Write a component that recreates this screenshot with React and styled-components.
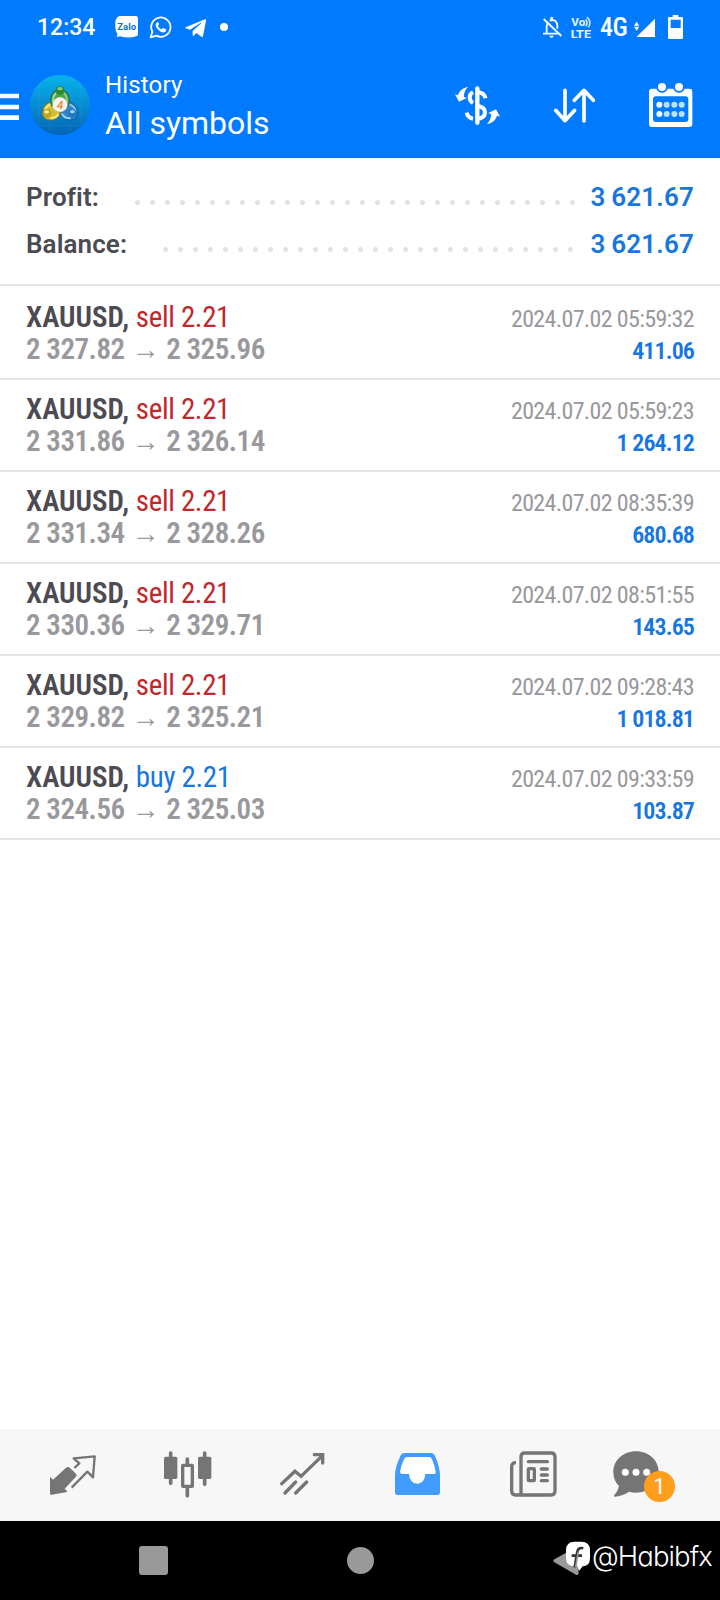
import React from 'react'
import styled, { createGlobalStyle } from 'styled-components'

const GlobalStyle = createGlobalStyle`
    * {
        box-sizing: border-box;
    }

    body {
        margin: 0;
        background: #fff;
        font-family: Roboto, sans-serif;
    }

    svg {
        display: block;
        flex: none;
    }
`

const summary = [
    { label: 'Profit:', value: '3 621.67' },
    { label: 'Balance:', value: '3 621.67' },
]

const deals = [
    { side: 'sell', open: '2 327.82', close: '2 325.96', time: '2024.07.02 05:59:32', profit: '411.06' },
    { side: 'sell', open: '2 331.86', close: '2 326.14', time: '2024.07.02 05:59:23', profit: '1 264.12' },
    { side: 'sell', open: '2 331.34', close: '2 328.26', time: '2024.07.02 08:35:39', profit: '680.68' },
    { side: 'sell', open: '2 330.36', close: '2 329.71', time: '2024.07.02 08:51:55', profit: '143.65' },
    { side: 'sell', open: '2 329.82', close: '2 325.21', time: '2024.07.02 09:28:43', profit: '1 018.81' },
    { side: 'buy', open: '2 324.56', close: '2 325.03', time: '2024.07.02 09:33:59', profit: '103.87' },
]

function App() {
    return (
        <Screen>
            <GlobalStyle />
            <Header>
                <StatusBar>
                    <Clock>12:34</Clock>
                    <StatusIcons>
                        <ZaloIcon />
                        <WhatsAppIcon />
                        <TelegramIcon />
                        <DotIcon />
                    </StatusIcons>
                    <StatusIcons $end>
                        <BellOffIcon />
                        <VolteIcon />
                        <Network>4G</Network>
                        <SignalIcon />
                        <BatteryIcon />
                    </StatusIcons>
                </StatusBar>
                <AppBar>
                    <Brand>
                        <MenuIcon />
                        <LogoIcon />
                    </Brand>
                    <Titles>
                        <Section>History</Section>
                        <Title>All symbols</Title>
                    </Titles>
                    <Actions>
                        <CurrencyIcon />
                        <SortIcon />
                        <CalendarIcon />
                    </Actions>
                </AppBar>
            </Header>

            <Summary>
                {summary.map((item) => (
                    <SummaryRow key={item.label}>
                        <Label>{item.label}</Label>
                        <Dots />
                        <Total>{item.value}</Total>
                    </SummaryRow>
                ))}
            </Summary>

            <Deals>
                {deals.map((deal) => (
                    <Deal key={deal.time}>
                        <Line>
                            <Symbol>
                                XAUUSD, <Side $buy={deal.side === 'buy'}>{deal.side} 2.21</Side>
                            </Symbol>
                            <Time>{deal.time}</Time>
                        </Line>
                        <Line>
                            <Prices>
                                {deal.open}
                                <Arrow>→</Arrow>
                                {deal.close}
                            </Prices>
                            <Profit>{deal.profit}</Profit>
                        </Line>
                    </Deal>
                ))}
            </Deals>

            <Tabs>
                <Tab><QuotesIcon /></Tab>
                <Tab><ChartIcon /></Tab>
                <Tab><TradeIcon /></Tab>
                <Tab $active><HistoryIcon /></Tab>
                <Tab><NewsIcon /></Tab>
                <Tab>
                    <ChatIcon />
                    <Badge>1</Badge>
                </Tab>
            </Tabs>

            <SystemNav>
                <Key><Recent /></Key>
                <Key><Home /></Key>
                <Key><BackIcon /></Key>
                <Watermark>
                    <FacebookIcon />
                    <Handle>@Habibfx</Handle>
                </Watermark>
            </SystemNav>
        </Screen>
    )
}

export default App

const ZaloIcon = () => (
    <svg width="25" height="27" viewBox="345 36 75 81">
        <path d="M357 45h50q7 0 7 7v46q0 6-5 8-24 7-49 0-5 2-11 1 4-3 3-8-6-8-6-22V64q0-12 11-19z" fill="#fff" />
        <text x="352" y="87" fontFamily="Roboto, sans-serif" fontSize="27" fontWeight="700" fill="#0a6fe6" textLength="56" lengthAdjust="spacingAndGlyphs">Zalo</text>
    </svg>
)

const WhatsAppIcon = () => (
    <svg width="24" height="27" viewBox="444 36 72 81">
        <path d="M452 109l5-17a29 29 0 1 1 12 12z" fill="none" stroke="#fff" strokeWidth="5.5" strokeLinejoin="round" />
        <path d="M472 64c-7 4-6 12 0 19s15 13 21 11c5-2 7-6 5-9l-8-4c-2-1-4 4-6 4-3-1-9-6-10-10 0-2 4-3 3-6l-3-6q-1-1-2 1z" fill="#fff" />
    </svg>
)

const TelegramIcon = () => (
    <svg width="27" height="27" viewBox="540 36 81 81">
        <path d="M557 79l58-24q4-1 3 4l-9 46q-1 5-5 2l-15-11-8 8q-3 3-3-2v-12l26-24q1-2-2-1l-32 21-13-4q-3-1 0-3z" fill="#fff" />
    </svg>
)

const DotIcon = () => (
    <svg width="13" height="27" viewBox="645 36 39 81">
        <circle cx="672" cy="78" r="12" fill="#fff" />
    </svg>
)

const BellOffIcon = () => (
    <svg width="21" height="27" viewBox="546 36 63 81">
        <path d="M560 99V76q0-8 5-13M569 59q21-7 23 14v10M549 98h44" fill="none" stroke="#fff" strokeWidth="5.5" />
        <path d="M571 58v-7a4 4 0 0 1 8 0v7zM568 104h13q-1 6-6.500 6t-6.500-6z" fill="#fff" />
        <path d="M551 54l53 51" stroke="#fff" strokeWidth="5.500" />
    </svg>
)

const VolteIcon = () => (
    <svg width="21" height="27" viewBox="633 36 63 81">
        <g fill="#fff" fillOpacity="0.9" fontFamily="Roboto, sans-serif" fontWeight="800">
            <text x="634" y="75" fontSize="30" textLength="42" lengthAdjust="spacingAndGlyphs">Vo</text>
            <text x="632" y="112" fontSize="34" textLength="61" lengthAdjust="spacingAndGlyphs">LTE</text>
        </g>
        <path d="M677 55q8 10 0 21M681 48q15 14 4 31" fill="none" stroke="#fff" strokeOpacity="0.8" strokeWidth="5" />
    </svg>
)

const SignalIcon = () => (
    <svg width="22" height="27" viewBox="822 36 66 81">
        <path d="M885 53v55h-56zM822 74l8-12 8 12zM822 77h16l-8 12z" fill="#fff" />
    </svg>
)

const BatteryIcon = () => (
    <svg width="22" height="27" viewBox="912 36 66 81">
        <path d="M938 42h17v6h10q4 0 4 4v58q0 4-4 4h-37q-4 0-4-4V52q0-4 4-4h10zM932 56v25h30V56z" fill="#fff" fillRule="evenodd" />
    </svg>
)

const MenuIcon = () => (
    <svg width="19" height="34" viewBox="0 264 57 102">
        <path d="M0 288h57M0 321h57M0 353h57" stroke="#fff" strokeWidth="14" />
    </svg>
)

const LogoIcon = () => (
    <svg width="60" height="60" viewBox="15 15 180 180">
        <defs>
            <linearGradient id="sky" x1="0" y1="0" x2="0" y2="1">
                <stop offset="0" stopColor="#08b4ea" />
                <stop offset="0.5" stopColor="#078bd2" />
                <stop offset="1" stopColor="#0563b4" />
            </linearGradient>
            <linearGradient id="green" x1="0" y1="0" x2="0" y2="1">
                <stop offset="0" stopColor="#3d9a45" />
                <stop offset="1" stopColor="#a5d790" />
            </linearGradient>
            <linearGradient id="yellow" x1="0" y1="0" x2="0" y2="1">
                <stop offset="0" stopColor="#f3e56c" />
                <stop offset="1" stopColor="#c4a528" />
            </linearGradient>
            <linearGradient id="blue" x1="0" y1="0" x2="0" y2="1">
                <stop offset="0" stopColor="#2b86cf" />
                <stop offset="1" stopColor="#8cc9f5" />
            </linearGradient>
        </defs>
        <circle cx="105" cy="105" r="90" fill="url(#sky)" />
        <path d="M42 45v120M75 25v160M135 25v160M168 45v120M25 75h160M17 105h176M25 135h160M45 167h120" stroke="#5cc6f0" strokeOpacity="0.18" strokeWidth="2" />
        <path d="M124 94q32 6 34 33 1 23-22 23-26 0-32-27z" fill="#2f84c8" stroke="#14589b" strokeWidth="3" />
        <path d="M129 102q21 5 23 23" fill="none" stroke="#7fc0f0" strokeWidth="6" />
        <path d="M110 131q9 15 27 14" fill="none" stroke="#9bd3fa" strokeWidth="6" />
        <path d="M84 94q-30 6-31 33 0 23 22 23 22 1 31-20z" fill="#d3bd35" stroke="#7d7423" strokeWidth="3" />
        <path d="M80 102q-19 6-20 22" fill="none" stroke="#f4ea7e" strokeWidth="6" />
        <path d="M76 145q16 0 24-12" fill="none" stroke="#f6e878" strokeWidth="6" />
        <path d="M79 107q-6-26 7-41 19-18 38 0 14 16 7 41z" fill="#4ba052" stroke="#1c6a3a" strokeWidth="3" />
        <path d="M85 98q-3-18 8-28" fill="none" stroke="#a5d98e" strokeWidth="6" />
        <path d="M125 98q3-18-8-28" fill="none" stroke="#8fcd7c" strokeWidth="6" />
        <circle cx="105" cy="61" r="13" fill="#2f8a38" />
        <ellipse cx="105" cy="56" rx="8" ry="5" fill="#8ccb80" />
        <circle cx="66" cy="130" r="13" fill="#c2a51f" />
        <ellipse cx="65" cy="126" rx="7" ry="5" fill="#f8ea8e" />
        <circle cx="142" cy="130" r="13" fill="#2277c4" />
        <ellipse cx="142" cy="125" rx="7" ry="5" fill="#a3d6fa" />
        <circle cx="105" cy="104" r="22" fill="#f8f5ef" stroke="#c9c9b8" strokeWidth="1.500" />
        <text x="105" y="117" textAnchor="middle" fontFamily="Roboto, sans-serif" fontSize="35" fontWeight="700" fontStyle="italic" fill="#ef8b4a">4</text>
    </svg>
)

const CurrencyIcon = () => (
    <svg width="52" height="50" viewBox="276 240 156 150">
        <g fill="none" stroke="#fff" strokeWidth="12">
            <path d="M339 277q-10 5-10 15 0 11 10 17M320 338q3 15 19 18" />
            <path d="M352 277q20 0 25 18M352 317q23 4 23 20 0 17-23 20" />
        </g>
        <path d="M352 265v103" stroke="#fff" strokeWidth="13" strokeLinecap="round" />
        <path d="M324 261c-13 2-26 10-30 25l-9-3 12 22 23-11-8-3c-1-12 4-22 12-30z" fill="#fff" />
        <path d="M324 261c-13 2-26 10-30 25l-9-3 12 22 23-11-8-3c-1-12 4-22 12-30z" fill="#fff" transform="rotate(180 352.500 316.500)" />
    </svg>
)

const SortIcon = () => (
    <svg width="50" height="50" viewBox="570 240 150 150">
        <path d="M615 271v90M587 331l28 31 29-31M672 363v-91M643 301l29-30 28 30" fill="none" stroke="#fff" strokeWidth="11" strokeLinecap="round" strokeLinejoin="round" />
    </svg>
)

const CalendarIcon = () => (
    <svg width="49" height="50" viewBox="858 240 147 150">
        <path d="M875 266h14q5 12 17 12t17-12h17q5 12 17 12t17-12h14q9 0 9 9v97q0 9-9 9H875q-8 0-8-9v-97q0-9 8-9zM888 289q-9 0-9 9v59q0 9 9 9h88q9 0 9-9v-59q0-9-9-9z" fill="#fff" fillRule="evenodd" />
        <circle cx="906" cy="261" r="12" fill="#fff" />
        <circle cx="957" cy="261" r="12" fill="#fff" />
        {[898, 920, 943, 965].map((x) => (
            <g key={x} fill={x === 898 ? '#f2faff' : '#b9e2ff'}>
                <circle cx={x} cy="314" r="9" />
                <circle cx={x} cy="342" r="9" />
            </g>
        ))}
    </svg>
)

const QuotesIcon = () => (
    <svg width="75" height="60" viewBox="105 75 225 180">
        <path d="M150 170l9 9 39-36q7-4 12 1l18 17q4 5 0 9l-34 36 8 8q0 2-5 3l-42 7q-5 1-5-4z" fill="currentColor" />
        <path d="M223 144l15-14-17-15 63-6-5 63-17-17-47 48" fill="none" stroke="currentColor" strokeWidth="7" strokeLinejoin="round" />
    </svg>
)

const ChartIcon = () => (
    <svg width="75" height="60" viewBox="450 75 225 180">
        <g fill="currentColor">
            <rect x="492" y="110" width="40" height="67" rx="5" />
            <rect x="594" y="110" width="40" height="67" rx="5" />
        </g>
        <rect x="548" y="136" width="29" height="63" rx="1" fill="none" stroke="currentColor" strokeWidth="10" />
        <path d="M512 99v91M614 99v94M562 117v16M562 204v23" stroke="currentColor" strokeWidth="11" strokeLinecap="round" />
    </svg>
)

const TradeIcon = () => (
    <svg width="75" height="60" viewBox="795 75 225 180">
        <g fill="none" stroke="currentColor" strokeWidth="10" strokeLinecap="round">
            <path d="M845 191l40-37 18 15 62-60M943 104h25v25M855 219l32-33M887 219l33-33" />
        </g>
    </svg>
)

const HistoryIcon = () => (
    <svg width="75" height="60" viewBox="60 75 225 180">
        <path d="M134 99h78q10 0 13 9 15 34 15 58v51q0 8-8 8H113q-8 0-8-8v-51q0-24 16-58 4-9 13-9z" fill="currentColor" />
        <path d="M141 111q-6 0-9 7-9 18-12 37 0 7 7 7h20q2 28 25 29 22-1 24-29h24q8 0 7-7-3-19-11-37-3-7-9-7z" fill="#fff" />
    </svg>
)

const NewsIcon = () => (
    <svg width="75" height="60" viewBox="405 75 225 180">
        <g fill="none" stroke="currentColor" strokeWidth="10">
            <path d="M468 128q-13 0-13 12v73q0 12 12 12h106q12 0 12-12v-102q0-12-12-12h-79q-11 0-11 12v113" />
            <rect x="505" y="146" width="18" height="36" rx="2" />
            <path d="M505 125h57M544 147h18M544 165h18M544 182h18" strokeLinecap="round" />
        </g>
    </svg>
)

const ChatIcon = () => (
    <svg width="75" height="60" viewBox="750 75 225 180">
        <path d="M828 94c39 0 68 27 68 62s-29 62-68 62q-11 0-21-3-20 14-44 15-3-2 0-5 12-13 14-27-17-16-17-42c0-35 29-62 68-62z" fill="currentColor" />
        <circle cx="796" cy="157" r="10.500" fill="#fff" />
        <circle cx="828" cy="157" r="10.500" fill="#fff" />
        <circle cx="860" cy="157" r="10.500" fill="#fff" />
    </svg>
)

const BackIcon = () => (
    <svg width="28" height="30" viewBox="0 0 28 30">
        <path d="M1 13.500L23.500 1q2-.5 2 1.500v25q0 2-2.500 1.200L1 16q-1.500-1.200 0-2.500z" fill="#999" />
    </svg>
)

const FacebookIcon = () => (
    <svg width="26" height="30" viewBox="612 370 78 90">
        <path d="M641 372h20q26 0 26 26v23q0 25-22 25l-9 12q-2 1-3-2l-3-10h-9q-26 0-26-25v-23q0-26 26-26z" fill="#fff" />
        <path d="M667 392q-15-4-18 10l-8 47M632 414h31" fill="none" stroke="#333" strokeWidth="8" />
        <path d="M652 402l-8 46" stroke="#999" strokeWidth="5" />
    </svg>
)

const Screen = styled.div`
    width: 720px;
    height: 1600px;
    display: flex;
    flex-direction: column;
    overflow: hidden;
    background: #fff;
`

const Header = styled.header`
    height: 158px;
    background: #007aff;
    border-bottom: 1px solid #1a6fd0;
    color: #fff;
`

const StatusBar = styled.div`
    display: flex;
    align-items: center;
    height: 52px;
    padding: 0 34px 0 37px;
`

const Clock = styled.div`
    width: 78px;
    padding-top: 2px;
    font-size: 23px;
    font-weight: 500;
`

const StatusIcons = styled.div`
    display: flex;
    align-items: center;
    gap: 8px;
    margin-left: ${(props) => (props.$end ? 'auto' : '0')};
`

const Network = styled.div`
    width: 26px;
    padding-top: 2px;
    font-family: 'Roboto Condensed', Roboto, sans-serif;
    font-size: 26px;
    font-weight: 500;
    letter-spacing: -0.4px;
    line-height: 27px;
    white-space: nowrap;
`

const AppBar = styled.div`
    display: flex;
    align-items: center;
    height: 106px;
    padding-right: 25px;
`

const Brand = styled.div`
    display: flex;
    align-items: center;
    gap: 11px;
`

const Titles = styled.div`
    align-self: flex-start;
    padding: 18px 0 0 15px;
`

const Section = styled.div`
    font-size: 24px;
    letter-spacing: 0.15px;
    line-height: 30px;
`

const Title = styled.h1`
    margin: 3px 0 0;
    font-size: 32px;
    font-weight: 400;
    line-height: 40px;
`

const Actions = styled.div`
    display: flex;
    gap: 46px;
    margin-left: auto;
`

const Summary = styled.section`
    height: 128px;
    padding: 16px 26px 0;
    border-bottom: 2px solid #e3e3e5;
`

const SummaryRow = styled.div`
    display: flex;
    align-items: center;
    height: 47px;
    font-size: 26px;
    line-height: 47px;
`

const Label = styled.span`
    color: #4b4b51;
    font-weight: 600;
    letter-spacing: 0.1px;
`

const Dots = styled.span`
    flex: 1;
    height: 5px;
    margin: 10px 14px 0 36px;
    background: radial-gradient(circle at 2.5px 2.5px, #e3e3e5 2.2px, transparent 2.8px) 0 0 / 15px 5px repeat-x;
`

const Total = styled.span`
    color: #1777df;
    font-weight: 600;
    letter-spacing: 0.2px;
    word-spacing: -1px;
`

const Deals = styled.main`
    flex: 1;
    padding-top: 2px;
    font-family: 'Roboto Condensed', Roboto, sans-serif;
`

const Deal = styled.article`
    height: 92px;
    padding: 13px 26px 0;
    border-bottom: 2px solid #e3e3e5;
`

const Line = styled.div`
    display: flex;
    align-items: baseline;
    justify-content: space-between;
    height: 32px;
    line-height: 32px;
    white-space: nowrap;
`

const Symbol = styled.span`
    color: #4b4b51;
    font-size: 29px;
    font-weight: 600;
`

const Side = styled.span`
    color: ${(props) => (props.$buy ? '#1777df' : '#c0282c')};
    font-weight: 400;
    letter-spacing: -0.35px;
`

const Time = styled.span`
    color: #98989d;
    font-size: 24px;
    letter-spacing: -0.64px;
`

const Prices = styled.span`
    color: #98989d;
    font-size: 29px;
    font-weight: 600;
    letter-spacing: -0.48px;
`

const Arrow = styled.span`
    margin: 0 7px;
    font-size: 28px;
    font-weight: 500;
`

const Profit = styled.span`
    color: #1777df;
    font-size: 24px;
    font-weight: 600;
    letter-spacing: -0.9px;
`

const Tabs = styled.nav`
    display: flex;
    height: 92px;
    padding: 0 15px;
    background: #f7f7f7;
`

const Tab = styled.div`
    position: relative;
    display: flex;
    align-items: center;
    justify-content: center;
    width: 115px;
    color: ${(props) => (props.$active ? '#429bff' : '#757575')};
`

const Badge = styled.span`
    position: absolute;
    top: 42px;
    left: 54px;
    width: 31px;
    height: 31px;
    border-radius: 50%;
    background: #ff9d1c;
    color: #fff;
    font-size: 22px;
    line-height: 32px;
    text-align: center;
`

const SystemNav = styled.footer`
    position: relative;
    display: flex;
    height: 79px;
    padding: 0 50px;
    background: #000;
`

const Key = styled.div`
    flex: 1;
    display: flex;
    align-items: center;
    justify-content: center;
`

const Recent = styled.span`
    width: 29px;
    height: 29px;
    border-radius: 3px;
    background: #999;
`

const Home = styled.span`
    width: 27px;
    height: 27px;
    border-radius: 50%;
    background: #999;
`

const Watermark = styled.div`
    position: absolute;
    top: 20px;
    right: 8px;
    display: flex;
    align-items: center;
    gap: 1px;
    color: #fff;
`

const Handle = styled.span`
    font-family: Inter, 'Noto Sans', sans-serif;
    font-feature-settings: 'cv11';
    font-size: 27.5px;
    font-weight: 300;
    letter-spacing: -0.9px;
    line-height: 30px;
`
